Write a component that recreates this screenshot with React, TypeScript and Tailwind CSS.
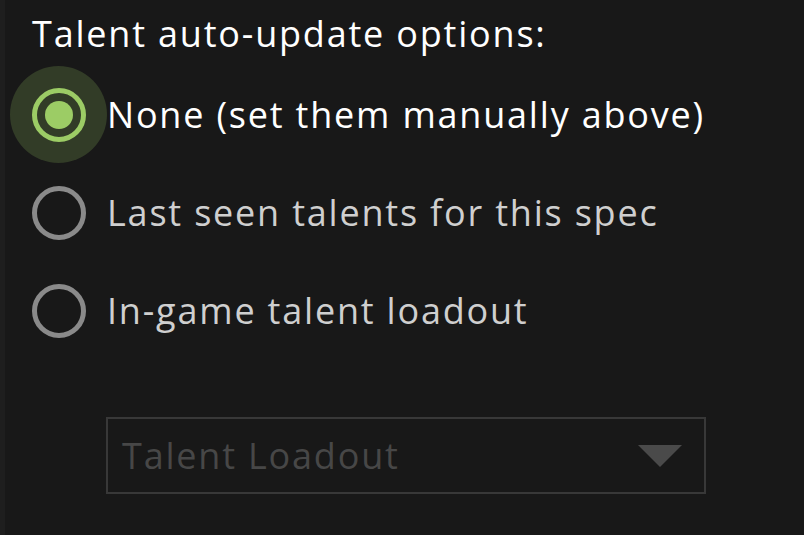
import React from "react";

const font = { fontFamily: '"Open Sans", sans-serif' };

function Radio({ checked }: { checked?: boolean }) {
  return (
    <div className="relative w-[54px] h-[54px] shrink-0">
      {checked && (
        <div className="absolute left-[-22px] top-[-22px] w-[97px] h-[97px] rounded-full bg-[#323c27]" />
      )}
      <div
        className={
          checked
            ? "absolute inset-0 rounded-full border-[5px] border-[#9ccc65] flex items-center justify-center"
            : "absolute inset-0 rounded-full border-[5px] border-[#8a8a8a]"
        }
      >
        {checked && <div className="w-[28px] h-[28px] rounded-full bg-[#9ccc65]" />}
      </div>
    </div>
  );
}

export default function App() {
  return (
    <div className="w-[804px] h-[535px] bg-[#181818] flex overflow-hidden tracking-[1.8px]" style={font}>
      <div className="w-[5px] h-full bg-[#1e1e1e] shrink-0" />
      <div className="flex flex-col pl-[27px] pt-[10px]">
        <div className="text-white text-[36px] leading-[48px]">Talent auto-update options:</div>
        <div className="flex items-center h-[98px] mt-[8px]">
          <Radio checked />
          <span className="ml-[21px] text-white text-[36px] leading-[48px]">None (set them manually above)</span>
        </div>
        <div className="flex items-center h-[98px]">
          <Radio />
          <span className="ml-[21px] text-[#cfcfcf] text-[36px] leading-[48px]">Last seen talents for this spec</span>
        </div>
        <div className="flex items-center h-[98px]">
          <Radio />
          <span className="ml-[21px] text-[#cfcfcf] text-[36px] leading-[48px]">In-game talent loadout</span>
        </div>
        <div className="ml-[74px] mt-[57px] w-[600px] h-[77px] border-2 border-[#383838] flex items-center justify-between pl-[14px] pr-[22px]">
          <span className="text-[#474747] text-[36px] leading-[48px]">Talent Loadout</span>
          <svg width="44" height="22" viewBox="0 0 44 22">
            <polygon points="0,0 44,0 22,22" fill="#4a4a4a" />
          </svg>
        </div>
      </div>
    </div>
  );
}
